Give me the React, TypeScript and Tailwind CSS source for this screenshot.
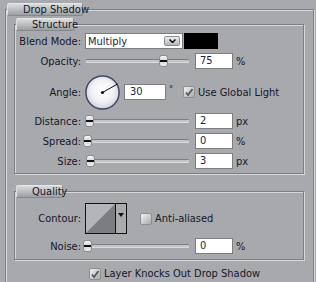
import React from 'react';

const font = { fontFamily: '"DejaVu Sans Condensed", "Liberation Sans", sans-serif' };

function Header({ label, w }: { label: string; w: string }) {
  return (
    <legend className="ml-[1px] p-0">
      <div
        className={`h-[13px] ${w} whitespace-nowrap rounded-[2px] border border-[#85888b] border-l-[#dcdee0] border-t-[#e6e7e9] bg-gradient-to-b from-[#dadcde] to-[#9da0a3] pl-[15px] text-[11px] leading-[11px]`}
      >
        {label}
      </div>
    </legend>
  );
}

function Check({ on }: { on?: boolean }) {
  return (
    <span className="relative inline-block h-[12px] w-[12px] rounded-[2px] border border-[#8d9093] bg-gradient-to-br from-[#f4f4f5] to-[#a8aaad]">
      {on && (
        <svg className="absolute left-0 top-0" width="10" height="10" viewBox="0 0 10 10">
          <path d="M2 5.5 L4 8 L8.5 2" fill="none" stroke="#55585c" strokeWidth="1.8" />
        </svg>
      )}
    </span>
  );
}

function Slider({ at }: { at: number }) {
  return (
    <div className="relative h-[16px] w-[104px]">
      <div className="absolute left-[1px] right-0 top-[6px] h-[3px] rounded-r-[1px] border-t border-[#7b7e81] bg-[#c3c5c8] shadow-[0_1px_0_#d9dbdd]" />
      <div
        className="absolute top-[2px] h-[12px] w-[9px] rounded-[3px] border border-[#8a8d90] bg-gradient-to-b from-[#f8f8f9] via-[#d3d5d7] to-[#eeeff0]"
        style={{ left: at }}
      >
        <div className="absolute left-0 right-0 top-[4px] h-[2px] bg-[#111]" />
      </div>
    </div>
  );
}

function Box({ v, w = 'w-[38px]' }: { v: string; w?: string }) {
  return (
    <div className={`h-[16px] ${w} border border-[#7b7e81] bg-white pl-[4px] text-[11px] leading-[14px] text-[#1a1f45]`}>
      {v}
    </div>
  );
}

function Label({ children }: { children: React.ReactNode }) {
  return <span className="w-[66px] text-right">{children}</span>;
}

function SliderRow({ label, at, v, unit, mt }: { label: string; at: number; v: string; unit: string; mt: string }) {
  return (
    <div className={`flex h-[16px] items-center ${mt}`}>
      <Label>{label}</Label>
      <div className="ml-[4px]">
        <Slider at={at} />
      </div>
      <div className="ml-[6px]">
        <Box v={v} />
      </div>
      <span className="ml-[3px]">{unit}</span>
    </div>
  );
}

const group = 'border border-[#7c7f82] shadow-[1px_1px_0_#d6d8da,inset_1px_1px_0_#d6d8da]';

export default function App() {
  return (
    <div
      className="h-[282px] w-[316px] overflow-hidden bg-[#a7a9ac] pt-[3px] text-[11px] leading-[13px] text-[#16162a]"
      style={font}
    >
      <fieldset className={`ml-[5px] h-[300px] w-[309px] ${group}`}>
        <Header label="Drop Shadow" w="w-[76px]" />

        <fieldset className={`ml-[8px] mt-[2px] w-[290px] pb-[4px] ${group}`}>
          <Header label="Structure" w="w-[58px]" />

          <div className="mt-[2px] flex h-[16px] items-center">
            <Label>Blend Mode:</Label>
            <div className="ml-[4px] flex h-[16px] w-[98px] items-center justify-between border border-[#7b7e81] bg-white pl-[2px] pr-[2px] text-[#1a1f45]">
              <span>Multiply</span>
              <span className="flex h-[10px] w-[16px] items-center justify-center rounded-[2px] border border-[#8a8d90] bg-gradient-to-b from-[#eeeff0] to-[#b4b6b9]">
                <svg width="7" height="4" viewBox="0 0 7 4">
                  <path d="M0.5 0.5 L3.5 3.5 L6.5 0.5" fill="none" stroke="#111" strokeWidth="1.5" />
                </svg>
              </span>
            </div>
            <div className="ml-[1px] h-[16px] w-[34px] bg-black" />
          </div>

          <SliderRow label="Opacity:" at={74} v="75" unit="%" mt="mt-[4px]" />

          <div className="mt-[6px] flex h-[34px] items-center">
            <Label>Angle:</Label>
            <svg className="ml-[4px]" width="35" height="35" viewBox="0 0 35 35">
              <defs>
                <radialGradient id="dial" cx="50%" cy="45%" r="55%">
                  <stop offset="0%" stopColor="#ffffff" />
                  <stop offset="60%" stopColor="#f1f2f4" />
                  <stop offset="100%" stopColor="#cfd2d8" />
                </radialGradient>
              </defs>
              <circle cx="17.5" cy="17.5" r="16.6" fill="url(#dial)" stroke="#414868" strokeWidth="1.5" />
              <line x1="17.5" y1="17.5" x2="32.5" y2="9" stroke="#111" strokeWidth="1" />
              <circle cx="17.5" cy="17.5" r="1.6" fill="#111" />
            </svg>
            <div className="ml-[4px]">
              <Box v="30" w="w-[42px] pl-[5px]" />
            </div>
            <span className="ml-[3px] self-start pt-[8px] text-[9px]">°</span>
            <span className="ml-[10px] flex items-center">
              <Check on />
              <span className="ml-[3px]">Use Global Light</span>
            </span>
          </div>

          <SliderRow label="Distance:" at={0} v="2" unit="px" mt="mt-[4px]" />
          <SliderRow label="Spread:" at={-2} v="0" unit="%" mt="mt-[4px]" />
          <SliderRow label="Size:" at={1} v="3" unit="px" mt="mt-[4px]" />
        </fieldset>

        <fieldset className={`ml-[8px] mt-[11px] w-[290px] pb-[5px] ${group}`}>
          <Header label="Quality" w="w-[47px]" />

          <div className="mt-[5px] flex h-[31px] items-center">
            <Label>Contour:</Label>
            <div className="ml-[4px] flex h-[31px] w-[42px] border border-[#111]">
              <svg width="29" height="29" viewBox="0 0 29 29" className="bg-[#b3b5b8]">
                <path d="M0 29 L29 0 L29 29 Z" fill="#7b7d80" />
              </svg>
              <div className="flex flex-1 items-start justify-center border-l border-[#111] bg-[#a9abae] pt-[9px]">
                <svg width="6" height="4" viewBox="0 0 6 4">
                  <path d="M0 0 L6 0 L3 4 Z" fill="#111" />
                </svg>
              </div>
            </div>
            <span className="ml-[13px] flex items-center">
              <Check />
              <span className="ml-[3px]">Anti-aliased</span>
            </span>
          </div>

          <SliderRow label="Noise:" at={-2} v="0" unit="%" mt="mt-[4px]" />
        </fieldset>

        <div className="mt-[7px] flex items-center pl-[83px]">
          <Check on />
          <span className="ml-[3px]">Layer Knocks Out Drop Shadow</span>
        </div>
      </fieldset>
    </div>
  );
}
